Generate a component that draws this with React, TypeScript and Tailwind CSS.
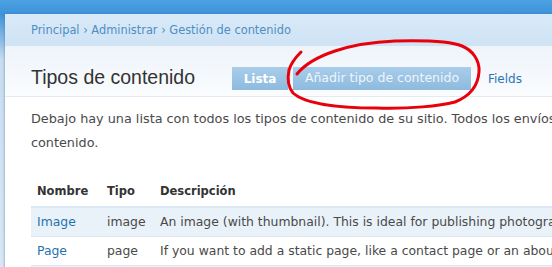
import React from "react";

const rows = [
  {
    name: "Image",
    type: "image",
    desc: "An image (with thumbnail). This is ideal for publishing photographs or screenshots.",
  },
  {
    name: "Page",
    type: "page",
    desc: "If you want to add a static page, like a contact page or an about page, use a page.",
  },
];

function Scribble() {
  // hand-drawn red circle around the "Añadir tipo de contenido" tab
  return (
    <svg className="pointer-events-none absolute left-0 top-0" width="552" height="267" viewBox="0 0 552 267">
      <path
        d="M301 52 C296 57 291 63 289 70 C287 80 289 88 293 93 C305 104 340 108 376 108 C410 109 440 106 455 102 C470 96 478 86 479 72 C480 60 472 50 462 46 C450 41 430 40 395 41 C370 42 350 46 335 51 C320 56 305 64 297 74"
        fill="none"
        stroke="#e8000a"
        strokeWidth="3"
        strokeLinecap="round"
        strokeLinejoin="round"
      />
    </svg>
  );
}

export default function App() {
  return (
    <div className="relative h-[267px] w-[552px] overflow-hidden bg-[linear-gradient(to_bottom,#4da2e2_0px,#3d92da_14px,#8cbbe6_40px,#c9ddf0_60px,#d9e7f3_100%)] pl-[5px] pt-[14px] font-['DejaVu_Sans',Verdana,sans-serif]">
      <div className="w-[980px] bg-white shadow-[-1px_0_2px_rgba(60,110,160,0.35)]">
        <div className="flex h-[32px] items-center bg-[linear-gradient(to_bottom,#d9eaf8,#cfe3f5)] pl-[26px] pt-[2px] text-[11.4px] text-[#4f8dc4]">
          Principal › Administrar › Gestión de contenido
        </div>

        <div className="flex h-[51px] items-end border-b border-[#e2ebf3] bg-[linear-gradient(to_bottom,#eef4fa,#fafcfe)] pb-[6px] pl-[26px]">
          <h1 className="mb-[1px] w-[201px] font-['Liberation_Sans',Arial,sans-serif] text-[19.5px] leading-[23px] text-[#333]">
            Tipos de contenido
          </h1>
          <div className="flex items-center">
            <span className="flex h-[23px] w-[56px] items-center justify-center bg-[linear-gradient(to_bottom,#a9cdea,#8dbade)] text-[12px] font-bold text-white">
              Lista
            </span>
            <span className="ml-[5px] flex h-[23px] w-[178px] items-center justify-center bg-[linear-gradient(to_bottom,#a9cdea,#8dbade)] text-[12.5px] text-[#eef5fb]">
              Añadir tipo de contenido
            </span>
            <span className="ml-[17px] text-[12px] text-[#2a76b3]">Fields</span>
          </div>
        </div>

        <div className="pl-[26px] pt-[10px]">
          <p className="whitespace-nowrap text-[12.8px] leading-[24px] text-[#494949]">
            Debajo hay una lista con todos los tipos de contenido de su sitio. Todos los envíos que existen en su sitio son
            instancias de uno de estos tipos de
            <br />
            contenido.
          </p>

          <table className="mt-[22px] w-[940px] border-collapse text-left text-[12.4px] text-[#494949]">
            <thead>
              <tr className="border-b-2 border-[#dbe8f4]">
                <th className="h-[30px] w-[70px] pl-[6px] text-[11.5px] font-bold text-[#333]">Nombre</th>
                <th className="w-[53px] pl-[6px] text-[11.5px] font-bold text-[#333]">Tipo</th>
                <th className="pl-[6px] text-[11.5px] font-bold text-[#333]">Descripción</th>
              </tr>
            </thead>
            <tbody>
              {rows.map((r, i) => (
                <tr key={r.name} className={`border-b border-[#dbe8f4] ${i % 2 === 0 ? "bg-[#eaf2f9]" : "bg-white"}`}>
                  <td className="h-[29px] pl-[6px] pt-[2px] text-[#1f72ae]">{r.name}</td>
                  <td className="pl-[6px] pt-[2px]">{r.type}</td>
                  <td className="whitespace-nowrap pl-[6px] pt-[2px]">{r.desc}</td>
                </tr>
              ))}
              <tr className="bg-[#eaf2f9]">
                <td className="h-[29px]" colSpan={3} />
              </tr>
            </tbody>
          </table>
        </div>
      </div>
      <Scribble />
    </div>
  );
}
